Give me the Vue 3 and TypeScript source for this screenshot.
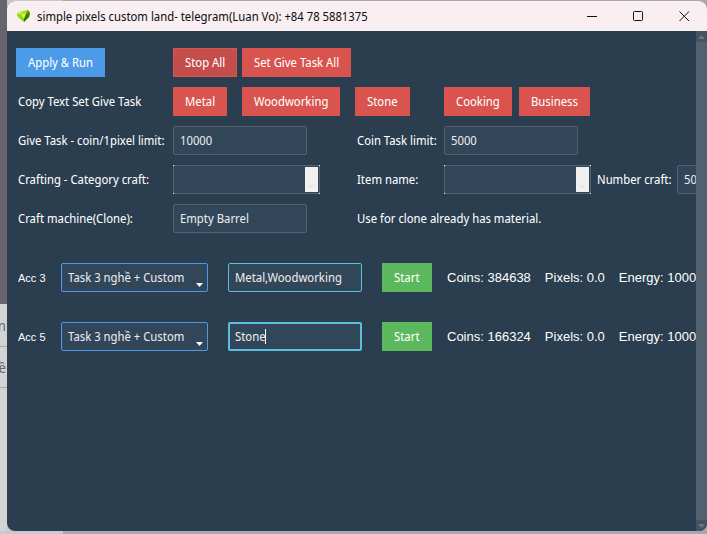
<script setup lang="ts">
import { ref } from 'vue'

interface Account {
  id: number
  task: string
  items: string
  coins: number
  pixels: string
  energy: string
  editing: boolean
}

const giveLimit = ref('10000')
const coinLimit = ref('5000')
const numberCraft = ref('50')
const machine = ref('Empty Barrel')
const category = ref('')
const itemName = ref('')

const accounts = ref<Account[]>([
  { id: 3, task: 'Task 3 nghề + Custom', items: 'Metal,Woodworking', coins: 384638, pixels: '0.0', energy: '1000', editing: false },
  { id: 5, task: 'Task 3 nghề + Custom', items: 'Stone', coins: 166324, pixels: '0.0', energy: '1000', editing: true },
])
</script>

<template>
  <div class="desktop">
    <div class="behind">
      <div class="shade"></div>
      <div class="peek">n</div>
      <div class="peek cut"><span>ề</span></div>
      <div class="rest"></div>
    </div>
    <main class="window">
      <header class="titlebar">
        <svg class="logo" width="14" height="13" viewBox="0 0 14 13">
          <path d="M2 2 L11 0 L13 3 L12 7 L7 12 L1 7 L0 4Z" fill="#7cc70f" />
          <path d="M2 2 L7 1 L4 4 L0 4Z" fill="#d8f23c" />
          <path d="M7 1 L11 0 L9 4 L4 4Z" fill="#a4e01c" />
          <path d="M11 0 L13 3 L9 4Z" fill="#5c960a" />
          <path d="M0 4 L4 4 L7 12 L1 7Z" fill="#8ede12" />
          <path d="M4 4 L9 4 L7 9Z" fill="#e0f95c" />
          <path d="M9 4 L13 3 L12 7 L7 12 L7 9Z" fill="#427508" />
        </svg>
        <h1>simple pixels custom land- telegram(Luan Vo): +84 78 5881375</h1>
        <div class="controls">
          <button type="button" aria-label="Minimize">
            <svg width="11" height="11" viewBox="0 0 11 11"><path d="M0 5.5H10" /></svg>
          </button>
          <button type="button" aria-label="Maximize">
            <svg width="11" height="11" viewBox="0 0 11 11"><rect x=".5" y=".5" width="9" height="9" rx="1" /></svg>
          </button>
          <button type="button" aria-label="Close">
            <svg width="11" height="11" viewBox="0 0 11 11"><path d="M.5 .5L10 10M10 .5L.5 10" /></svg>
          </button>
        </div>
      </header>

      <div class="body">
        <div class="content">
          <section class="settings">
            <button type="button" class="btn primary c1">Apply &amp; Run</button>
            <button type="button" class="btn danger active c2">Stop All</button>
            <button type="button" class="btn danger c3">Set Give Task All</button>

            <span class="label c1">Copy Text Set Give Task</span>
            <button type="button" class="btn danger c2">Metal</button>
            <button type="button" class="btn danger c3">Woodworking</button>
            <button type="button" class="btn danger c4">Stone</button>
            <button type="button" class="btn danger c5">Cooking</button>
            <button type="button" class="btn danger c6">Business</button>

            <label class="label c1" for="give">Give Task - coin/1pixel limit:</label>
            <input id="give" v-model="giveLimit" class="field s2" type="text" />
            <label class="label c4" for="coin">Coin Task limit:</label>
            <input id="coin" v-model="coinLimit" class="field s5" type="text" />

            <label class="label c1" for="category">Crafting - Category craft:</label>
            <div class="combo cornered s2">
              <select id="category" v-model="category"><option value=""></option></select>
              <span class="drop"><svg width="7" height="4" viewBox="0 0 7 4"><path d="M0 0H7L3.500 4Z" /></svg></span>
            </div>
            <label class="label c4" for="item">Item name:</label>
            <div class="combo cornered s5">
              <select id="item" v-model="itemName"><option value=""></option></select>
              <span class="drop"><svg width="7" height="4" viewBox="0 0 7 4"><path d="M0 0H7L3.500 4Z" /></svg></span>
            </div>
            <label class="label c7" for="number">Number craft:</label>
            <input id="number" v-model="numberCraft" class="field c8" type="text" />

            <label class="label c1" for="machine">Craft machine(Clone):</label>
            <input id="machine" v-model="machine" class="field s2" type="text" />
            <span class="label c4">Use for clone already has material.</span>
          </section>

          <section class="accounts">
            <div v-for="a in accounts" :key="a.id" class="account">
              <label class="name" :for="'items' + a.id">Acc {{ a.id }}</label>
              <div class="combo blue">
                <select v-model="a.task" :aria-label="'Task for Acc ' + a.id"><option>Task 3 nghề + Custom</option></select>
                <svg class="arrow" width="7" height="4" viewBox="0 0 7 4"><path d="M0 0H7L3.500 4Z" /></svg>
              </div>
              <div class="entry">
                <input :id="'items' + a.id" v-model="a.items" class="field cyan" :class="{ editing: a.editing }" type="text" />
                <span v-if="a.editing" class="caret"></span>
              </div>
              <button type="button" class="btn success">Start</button>
              <div class="stats">
                <span>Coins: {{ a.coins }}</span>
                <span>Pixels: {{ a.pixels }}</span>
                <span>Energy: {{ a.energy }}</span>
              </div>
            </div>
          </section>
        </div>
        <div class="scroll">
          <span class="cap"><svg width="7" height="4" viewBox="0 0 7 4"><path d="M0 4H7L3.500 0Z" /></svg></span>
          <span class="cap"><svg width="7" height="4" viewBox="0 0 7 4"><path d="M0 0H7L3.500 4Z" /></svg></span>
        </div>
      </div>
    </main>
  </div>
</template>

<style>
body {
  margin: 0;
  overflow: hidden;
}
</style>

<style scoped>
* {
  box-sizing: border-box;
}
.desktop {
  display: grid;
  grid-template-columns: 7px 1fr;
  height: 100vh;
  padding-bottom: 3px;
  overflow: hidden;
  background: linear-gradient(90deg, #c9c9ca 63px, #a9a7ae 63px);
  font-family: "Noto Sans Display", "Noto Sans", "Open Sans", sans-serif;
  font-size: 12px;
}
.behind {
  display: flex;
  flex-direction: column;
  overflow: hidden;
  background: #d3d3d4;
  color: #66666b;
  font-size: 14px;
}
.shade {
  height: 304px;
  background: #676470;
}
.peek {
  display: flex;
  align-items: center;
  justify-content: flex-end;
  height: 43px;
  padding-right: 1px;
  border-bottom: 1px solid #aaaaad;
}
.cut {
  height: 41px;
}
.rest {
  flex: 1;
}
.window {
  display: flex;
  flex-direction: column;
  min-width: 0;
  margin-top: 1px;
  overflow: hidden;
  border-radius: 8px;
  background: #2b3e50;
  color: #fff;
}
.titlebar {
  display: flex;
  align-items: center;
  flex: none;
  height: 30px;
  padding-left: 10px;
  background: #f9eff3;
  color: #111;
}
h1 {
  flex: 1;
  margin: 0 0 0 6px;
  font-size: 12px;
  font-weight: 400;
  white-space: nowrap;
}
.controls {
  display: flex;
}
.controls button {
  display: flex;
  align-items: center;
  justify-content: center;
  width: 46px;
  height: 30px;
  padding: 0;
  border: 0;
  background: none;
}
.controls svg {
  fill: none;
  stroke: #111;
  stroke-width: 1;
}
.body {
  display: flex;
  flex: 1;
  min-height: 0;
}
.content {
  flex: 1;
  min-width: 0;
  padding: 17px 0 0 9px;
  overflow: hidden;
}
.settings {
  display: grid;
  grid-template-columns: 157px 69px 113px 89px 75px 76px 82px 134px;
  grid-auto-rows: 29px;
  row-gap: 10px;
}
.c1 { grid-column: 1; }
.c2 { grid-column: 2; }
.c3 { grid-column: 3; }
.c4 { grid-column: 4; }
.c5 { grid-column: 5; }
.c6 { grid-column: 6; }
.c7 { grid-column: 7; }
.c8 { grid-column: 8; }
.s2 { grid-column: 2 / 4; }
.s5 { grid-column: 5 / 7; }
.label {
  align-self: center;
  padding-left: 2px;
  white-space: nowrap;
}
.btn {
  justify-self: start;
  height: 29px;
  padding: 0 12px;
  border: 0;
  border-radius: 0;
  color: #fff;
  font: inherit;
  white-space: nowrap;
}
.primary {
  background: #4c9be8;
}
.danger {
  background: #d9534f;
}
.active {
  background: #c54e4d;
  box-shadow: inset 0 0 0 1px #d9534f;
}
.success {
  background: #5cb85c;
}
.field {
  width: 134px;
  height: 29px;
  padding: 0 6px;
  border: 1px solid #526170;
  border-radius: 2px;
  outline: 0;
  background: #32465a;
  color: #ebebeb;
  font: inherit;
}
.combo {
  position: relative;
  width: 147px;
  height: 29px;
}
.combo select {
  width: 100%;
  height: 100%;
  padding: 0 6px;
  border: 1px solid #526170;
  border-radius: 2px;
  outline: 0;
  appearance: none;
  background: #32465a;
  color: #ebebeb;
  font: inherit;
}
.cornered {
  background: #fff;
}
.blue select {
  border-color: #4c9be8;
}
.drop {
  position: absolute;
  top: 2px;
  right: 2px;
  bottom: 2px;
  display: flex;
  align-items: flex-end;
  justify-content: center;
  width: 13px;
  padding-bottom: 3px;
  background: #f0f0f0;
  fill: #e6e6e6;
  pointer-events: none;
}
.arrow {
  position: absolute;
  right: 5px;
  bottom: 5px;
  fill: #fff;
  pointer-events: none;
}
.accounts {
  display: flex;
  flex-direction: column;
  gap: 30px;
  margin-top: 30px;
}
.account {
  display: grid;
  grid-template-columns: 45px 167px 154px 65px max-content;
  align-items: center;
}
.name {
  padding-left: 2px;
  font-family: "Liberation Sans", Arial, sans-serif;
  font-size: 11px;
}
.entry {
  position: relative;
  display: flex;
}
.cyan {
  border-color: #5bc0de;
}
.editing {
  padding: 0 5px;
  border-width: 2px;
}
.caret {
  position: absolute;
  top: 7px;
  left: 37px;
  width: 1px;
  height: 15px;
  background: #fff;
}
.stats {
  display: flex;
  gap: 14px;
  font-family: "Liberation Sans", Arial, sans-serif;
  font-size: 13px;
  white-space: nowrap;
}
.scroll {
  display: flex;
  flex-direction: column;
  justify-content: space-between;
  flex: none;
  width: 11px;
  background: #526170;
}
.cap {
  display: flex;
  align-items: center;
  justify-content: center;
  height: 11px;
  background: #46525e;
  fill: #6a7783;
}
</style>
